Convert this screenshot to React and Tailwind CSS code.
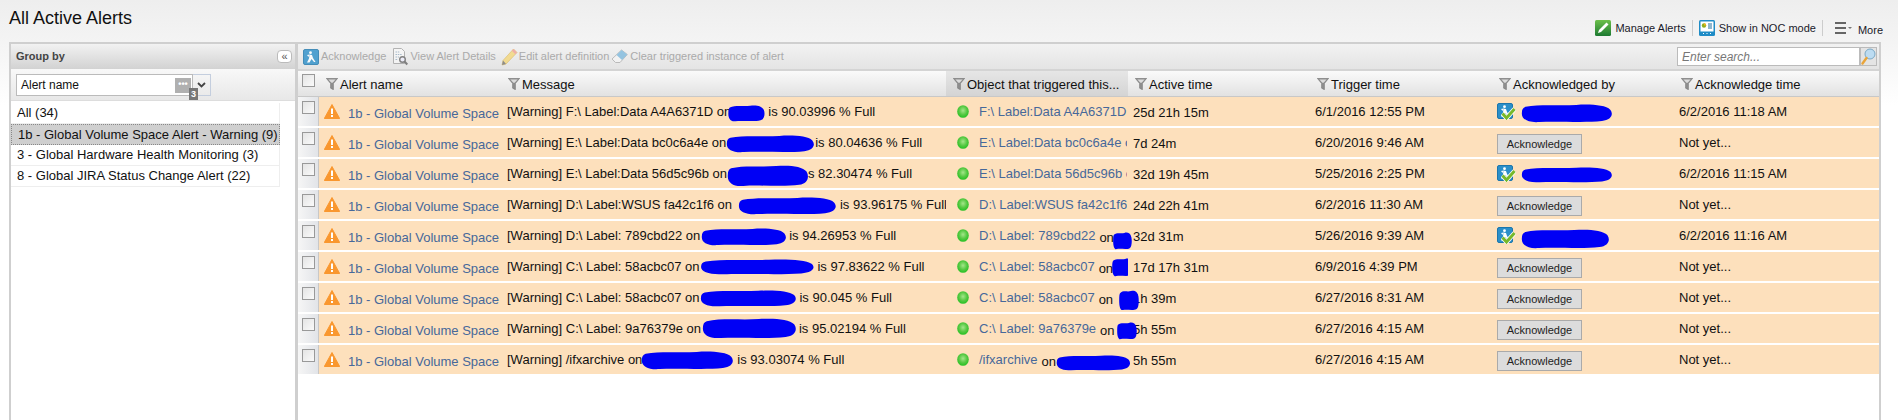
import React from "react";

const rowGrid =
  "grid grid-cols-[21px_184px_443px_182px_183px_182px_182px_204px]";

const Blob = ({ className }) => (
  <svg
    viewBox="0 0 100 20"
    preserveAspectRatio="none"
    className={`block shrink-0 ${className}`}
  >
    <path
      d="M5 3 C20 0 40 2 60 1 C75 0 92 1 97 6 C101 11 98 17 88 18 C70 20 40 18 20 19 C8 20 0 16 1 9 C1 6 2 4 5 3Z"
      fill="#0000f5"
    />
  </svg>
);

const FilterIcon = () => (
  <svg width="12" height="12" viewBox="0 0 12 12" className="shrink-0 -translate-y-px">
    <path d="M0.3 0.3 H11.7 L7.4 5.5 V11.7 L4.6 10.2 V5.5Z" fill="#8f8f8f" stroke="#747474" strokeWidth="0.6" />
    <path d="M2.4 1.4 H9.6 L6.6 4.8 H5.4Z" fill="#dcdcdc" />
  </svg>
);

const WarnIcon = () => (
  <svg width="16" height="15" viewBox="0 0 16 15" className="shrink-0">
    <path d="M8 0.5 L15.7 14.5 H0.3Z" fill="#f9972f" stroke="#f9972f" strokeLinejoin="round" />
    <rect x="7" y="4.5" width="2" height="5.5" fill="#fff" />
    <rect x="7" y="11" width="2" height="2" fill="#fff" />
  </svg>
);

const GreenDot = () => (
  <svg width="12" height="13" viewBox="0 0 12 13" className="shrink-0 -translate-y-px">
    <defs>
      <radialGradient id="dotFill" cx="50%" cy="42%" r="60%">
        <stop offset="0%" stopColor="#a4e68a" />
        <stop offset="55%" stopColor="#58c944" />
        <stop offset="100%" stopColor="#1fc01f" />
      </radialGradient>
    </defs>
    <ellipse cx="6" cy="6.5" rx="5.8" ry="6.3" fill="url(#dotFill)" />
  </svg>
);

const AckBlue = ({ faded }) => (
  <svg width="16" height="16" viewBox="0 0 16 16" className={`block shrink-0 ${faded ? "opacity-80" : ""}`}>
    <rect x="0.5" y="0.5" width="15" height="15" rx="1.5" fill="#2b8fc9" stroke="#1c76ac" />
    <circle cx="7.5" cy="3.7" r="1.4" fill="#fff" />
    <path d="M6.5 5.5 L9 6 L10 9 L12.5 13 H11 L8.5 10 L6.5 13.5 H4 L6 9.5Z M4 6 L6.5 5.5 L5.5 8 Z" fill="#fff" />
  </svg>
);

const AckChecked = () => (
  <div className="relative w-[18px] h-[17px] shrink-0 -translate-y-px">
    <AckBlue />
    <svg width="15" height="13" viewBox="0 0 15 13" className="absolute right-[-1px] bottom-0">
      <path d="M1.5 6.5 L5.5 11 L13.5 2" fill="none" stroke="#fff" strokeWidth="4.6" />
      <path d="M1.5 6.5 L5.5 11 L13.5 2" fill="none" stroke="#78b82a" strokeWidth="3" />
    </svg>
  </div>
);

const DetailsIcon = () => (
  <svg width="16" height="18" viewBox="0 0 16 18" className="block shrink-0 opacity-70">
    <path d="M1.5 0.5 H9.5 L12.5 3.5 V15.5 H1.5Z" fill="#f8f8f8" stroke="#9a9a9a" />
    <path d="M3.5 4 H8 M3.5 6.5 H10 M3.5 9 H7 M3.5 11.5 H6" stroke="#8aa6bd" strokeDasharray="1.5 0.8" />
    <circle cx="10.5" cy="11.5" r="2.8" fill="#eef" stroke="#555" strokeWidth="1.4" />
    <path d="M12.5 13.5 L15.3 16.5" stroke="#555" strokeWidth="2" />
  </svg>
);

const PencilIcon = () => (
  <svg width="17" height="18" viewBox="0 0 17 18" className="block shrink-0 opacity-80">
    <path d="M12.5 1 L16 4.5 L5 16 L1 17 L2 12.5Z" fill="#f4d77a" stroke="#d8b65a" strokeWidth="0.7" />
    <path d="M12.5 1 L16 4.5 L14.3 6.3 L10.8 2.8Z" fill="#ef9f95" />
    <path d="M2 12.5 L5 16 L1 17Z" fill="#777" />
  </svg>
);

const EraserIcon = () => (
  <svg width="17" height="16" viewBox="0 0 17 16" className="block shrink-0 opacity-70">
    <path d="M10.5 1 L16.3 5.5 L9 13.5 H4.5 L1 10Z" fill="#f6f6f6" stroke="#a8a8a8" />
    <path d="M10.5 1 L16.3 5.5 L11 11 L5.5 6Z" fill="#6fb3dc" />
  </svg>
);

const ManageIcon = () => (
  <svg width="16" height="16" viewBox="0 0 16 16" className="shrink-0">
    <defs>
      <linearGradient id="manageFill" x1="0" y1="0" x2="0" y2="1">
        <stop offset="0%" stopColor="#6cc04a" />
        <stop offset="100%" stopColor="#1d7a32" />
      </linearGradient>
    </defs>
    <rect width="16" height="16" rx="1.5" fill="url(#manageFill)" />
    <path d="M11.5 2.5 L13.5 4.5 L6 12 L3 13 L4 10Z" fill="#fff" />
  </svg>
);

const NocIcon = () => (
  <svg width="16" height="16" viewBox="0 0 16 16" className="shrink-0">
    <rect width="16" height="16" rx="1.5" fill="#1f8cc6" />
    <rect x="1.5" y="1.5" width="13" height="10" fill="#fff" />
    <circle cx="5" cy="5.5" r="2.2" fill="#8fae1c" />
    <path d="M5 5.5 V3.3 A2.2 2.2 0 0 1 7.2 5.5Z" fill="#f2b21c" />
    <path d="M9 4 H13 M9 6 H13 M9 8 H13" stroke="#1f6f9e" />
    <path d="M4 13.5 H5 M7.5 13.5 H8.5 M11 13.5 H12" stroke="#fff" />
  </svg>
);

const SearchIcon = () => (
  <svg width="15" height="17" viewBox="0 0 15 17">
    <circle cx="9" cy="6" r="5" fill="#bcdcf2" stroke="#7ba9c6" />
    <path d="M5.5 10 L1.5 15.5" stroke="#e9a53a" strokeWidth="2.4" strokeLinecap="round" />
  </svg>
);

const rows = [
  {
    msg: "[Warning] F:\\ Label:Data A4A6371D on",
    blob: "w-[37px] h-[17px] ml-[-3px] translate-y-[1px]",
    rest: "is 90.03996 % Full",
    restClass: "ml-[3px]",
    obj: "F:\\ Label:Data A4A6371D",
    active: "25d 21h 15m",
    trigger: "6/1/2016 12:55 PM",
    by: "w-[92px] h-[19px] translate-y-[1px]",
    time: "6/2/2016 11:18 AM",
  },
  {
    msg: "[Warning] E:\\ Label:Data bc0c6a4e on",
    blob: "w-[89px] h-[18px] translate-y-[1px]",
    rest: "is 80.04636 % Full",
    obj: "E:\\ Label:Data bc0c6a4e on",
    active: "7d 24m",
    trigger: "6/20/2016 9:46 AM",
    time: "Not yet...",
  },
  {
    msg: "[Warning] E:\\ Label:Data 56d5c96b on",
    blob: "w-[82px] h-[22px] translate-y-[2px]",
    rest: "s 82.30474 % Full",
    restClass: "ml-[-1px]",
    obj: "E:\\ Label:Data 56d5c96b on",
    active: "32d 19h 45m",
    trigger: "5/25/2016 2:25 PM",
    by: "w-[92px] h-[16px] translate-y-[1px]",
    time: "6/2/2016 11:15 AM",
  },
  {
    msg: "[Warning] D:\\ Label:WSUS fa42c1f6 on",
    blob: "w-[99px] h-[18px] ml-[6px] translate-y-[1px]",
    rest: "is 93.96175 % Full",
    restClass: "ml-[3px]",
    obj: "D:\\ Label:WSUS fa42c1f6",
    active: "24d 22h 41m",
    trigger: "6/2/2016 11:30 AM",
    time: "Not yet...",
  },
  {
    msg: "[Warning] D:\\ Label: 789cbd22 on",
    blob: "w-[86px] h-[18px] ml-[1px] translate-y-[1px]",
    rest: "is 94.26953 % Full",
    restClass: "ml-[2px]",
    obj: "D:\\ Label: 789cbd22",
    on: true,
    objBlob: "w-[19px] h-[18px] ml-[-1px] translate-y-[5px]",
    active: "32d 31m",
    trigger: "5/26/2016 9:39 AM",
    by: "w-[89px] h-[20px] translate-y-[3px]",
    time: "6/2/2016 11:16 AM",
  },
  {
    msg: "[Warning] C:\\ Label: 58acbc07 on",
    blob: "w-[115px] h-[16px] ml-[1px]",
    rest: "is 97.83622 % Full",
    restClass: "ml-[2px]",
    obj: "C:\\ Label: 58acbc07",
    on: true,
    objBlob: "w-[22px] h-[19px] ml-[-1px]",
    active: "17d 17h 31m",
    trigger: "6/9/2016 4:39 PM",
    time: "Not yet...",
  },
  {
    msg: "[Warning] C:\\ Label: 58acbc07 on",
    blob: "w-[97px] h-[17px] ml-[1px]",
    rest: "is 90.045 % Full",
    restClass: "ml-[2px]",
    obj: "C:\\ Label: 58acbc07",
    on: true,
    objBlob: "w-[20px] h-[21px] ml-[6px] translate-y-[2px]",
    active: "1h 39m",
    trigger: "6/27/2016 8:31 AM",
    time: "Not yet...",
  },
  {
    msg: "[Warning] C:\\ Label: 9a76379e on",
    blob: "w-[95px] h-[21px] ml-[1px] translate-y-[-1px]",
    rest: "is 95.02194 % Full",
    restClass: "ml-[2px]",
    obj: "C:\\ Label: 9a76379e",
    on: true,
    objBlob: "w-[20px] h-[18px] ml-[2px] translate-y-[2px]",
    active: "5h 55m",
    trigger: "6/27/2016 4:15 AM",
    time: "Not yet...",
  },
  {
    msg: "[Warning] /ifxarchive on",
    blob: "w-[93px] h-[19px] ml-[-1px]",
    rest: "is 93.03074 % Full",
    restClass: "ml-[3px]",
    obj: "/ifxarchive",
    on: true,
    objBlob: "w-[75px] h-[16px] translate-y-[3px]",
    active: "5h 55m",
    trigger: "6/27/2016 4:15 AM",
    time: "Not yet...",
  },
];

const groups = [
  { label: "All (34)" },
  { label: "1b - Global Volume Space Alert - Warning (9)", selected: true },
  { label: "3 - Global Hardware Health Monitoring (3)" },
  { label: "8 - Global JIRA Status Change Alert (22)" },
];

const columns = [
  { label: "Alert name", cls: "pl-[7px]" },
  { label: "Message", cls: "pl-[5px]" },
  { label: "Object that triggered this...", cls: "pl-[7px] bg-gradient-to-b from-[#e6e6e6] to-[#d4d4d4]" },
  { label: "Active time", cls: "pl-[7px]" },
  { label: "Trigger time", cls: "pl-[6px]" },
  { label: "Acknowledged by", cls: "pl-[6px]" },
  { label: "Acknowledge time", cls: "pl-[6px]" },
];

const Checkbox = () => (
  <div className="w-[13px] h-[13px] border border-[#999] bg-gradient-to-br from-[#e4e4e4] to-[#fafafa]" />
);

const AlertRow = ({ row }) => (
  <div className={`${rowGrid} h-[31px] border-b-2 border-white text-[13px] text-[#111]`}>
    <div className="flex justify-start pl-1 pt-1 bg-gradient-to-r from-[#f6f6f6] to-[#e2e4e8] border-r border-[#c8c8c8]">
      <Checkbox />
    </div>
    <div className="flex items-center gap-2 pl-[5px] bg-[#fde0bc]">
      <WarnIcon />
      <span className="text-[#46689a] whitespace-nowrap translate-y-[2px]">1b - Global Volume Space</span>
    </div>
    <div className="flex items-center pl-1 pt-px bg-[#fde0bc] whitespace-nowrap">
      <span>{row.msg}</span>
      <Blob className={row.blob} />
      <span className={row.restClass}>{row.rest}</span>
    </div>
    <div className="flex items-center pl-[11px] pt-px bg-[#fde0bc] whitespace-nowrap">
      <GreenDot />
      {row.on ? (
        <>
          <span className="ml-[10px] text-[#46689a]">{row.obj}</span>
          <span className="ml-1 translate-y-[2px]">on</span>
          <Blob className={row.objBlob} />
        </>
      ) : (
        <span className="ml-[10px] w-[148px] overflow-hidden text-[#46689a]">{row.obj}</span>
      )}
    </div>
    <div className="flex items-center pl-[5px] pt-[2px] bg-[#fde0bc] whitespace-nowrap">{row.active}</div>
    <div className="flex items-center pl-1 pt-px bg-[#fde0bc] whitespace-nowrap">{row.trigger}</div>
    <div className="flex items-center pl-1 pt-px bg-[#fde0bc]">
      {row.by ? (
        <>
          <AckChecked />
          <Blob className={`ml-[6px] ${row.by}`} />
        </>
      ) : (
        <button className="w-[85px] h-[20px] border border-[#aaa] bg-[#dcdcdc] text-[11px] text-[#222] translate-y-[1px]">
          Acknowledge
        </button>
      )}
    </div>
    <div className="flex items-center pl-1 pt-px bg-[#fde0bc] whitespace-nowrap">{row.time}</div>
  </div>
);

export default function App() {
  return (
    <div className="h-[420px] w-[1898px] overflow-hidden bg-gradient-to-b from-[#eeeeee] via-[#f4f4f4] via-10% to-white to-25% font-['Liberation_Sans',Arial,sans-serif] text-[#111]">
      <div className="h-[42px] flex justify-between items-start">
        <h1 className="pl-[9px] pt-2 text-[18px] leading-5">All Active Alerts</h1>
        <div className="flex items-center pt-5 pr-[15px] text-[11px] leading-4 text-[#1a1a2a]">
          <ManageIcon />
          <span className="ml-1">Manage Alerts</span>
          <div className="mx-[6px] w-px h-4 bg-[#ccc]" />
          <NocIcon />
          <span className="ml-1">Show in NOC mode</span>
          <div className="ml-[6px] w-px h-4 bg-[#ccc]" />
          <div className="ml-[12px] flex flex-col gap-[3px]">
            <div className="w-[11px] h-[2px] bg-[#666]" />
            <div className="w-[11px] h-[2px] bg-[#666]" />
            <div className="w-[11px] h-[2px] bg-[#666]" />
          </div>
          <div className="ml-[2px] mr-[6px] border-x-2 border-t-2 border-x-transparent border-t-[#777]" />
          <span className="translate-y-[2px]">More</span>
        </div>
      </div>

      <div className="ml-[9px] w-[1872px] h-[378px] flex border-t-2 border-x-2 border-[#cfcfcf]">
        {/* group by panel */}
        <div className="w-[284px] shrink-0 border-r-[3px] box-content border-[#cfcfcf] bg-white">
          <div className="h-[25px] flex items-center justify-between pl-[5px] pr-[3px] bg-gradient-to-b from-[#f2f2f2] to-[#d2d2d2]">
            <span className="text-[11px] font-bold text-[#444]">Group by</span>
            <div className="w-[15px] h-[13px] rounded-sm border border-[#bbb] bg-white flex items-center justify-center text-[11px] leading-none text-[#555]">
              «
            </div>
          </div>
          <div className="h-[32px] pt-[5px] pl-[5px] bg-gradient-to-b from-[#f8f8f8] to-[#e8e8e8] border-b border-[#ddd]">
            <div className="relative flex w-[195px] h-[22px]">
              <div className="w-[177px] border border-[#bbb] bg-white flex items-center justify-between pl-1 pr-px text-[12px]">
                <span>Alert name</span>
                <div className="w-[16px] h-[15px] bg-[#b0b0b0] text-white text-[9px] font-bold leading-3 text-center">
                  •••
                </div>
              </div>
              <div className="w-[18px] border-y border-r border-[#c4cede] flex items-center justify-center">
                <svg width="9" height="6" viewBox="0 0 9 6">
                  <path d="M1 1 L4.5 4.5 L8 1" fill="none" stroke="#444" strokeWidth="1.8" />
                </svg>
              </div>
              <div className="absolute left-[173px] top-[14px] w-[9px] h-[12px] bg-[#777] text-white text-[9px] font-bold leading-3 text-center">
                3
              </div>
            </div>
          </div>
          <div className="w-[269px] pt-[2px] text-[13px]">
            {groups.map((g) => (
              <div
                key={g.label}
                className={`h-[21px] pl-[6px] flex items-center whitespace-nowrap border-b border-r ${
                  g.selected ? "bg-[#cfcfcf] border border-dotted border-[#888]" : "border-[#eee]"
                }`}
              >
                {g.label}
              </div>
            ))}
          </div>
        </div>

        {/* alerts grid */}
        <div className="flex-1 min-w-0 bg-white">
          <div className="h-[27px] flex items-center justify-between pl-[5px] pr-[2px] bg-gradient-to-b from-[#f2f2f2] to-[#e4e4e4] border-b-2 border-[#d4d4d4] text-[11px] text-[#aaa]">
            <div className="flex items-center">
              <AckBlue faded />
              <span className="ml-[2px]">Acknowledge</span>
              <div className="ml-[6px]"><DetailsIcon /></div>
              <span className="ml-[2px]">View Alert Details</span>
              <div className="ml-[5px]"><PencilIcon /></div>
              <span className="ml-[1px]">Edit alert definition</span>
              <div className="ml-[2px]"><EraserIcon /></div>
              <span className="ml-[2px]">Clear triggered instance of alert</span>
            </div>
            <div className="flex items-center">
              <input
                readOnly
                placeholder="Enter search..."
                className="w-[183px] h-[19px] pl-1 border border-[#bbb] bg-white text-[12px] italic placeholder:text-[#777] outline-none"
              />
              <div className="w-[17px] h-[19px] border border-[#bbb] bg-[#e4e4e4] flex items-center justify-center">
                <SearchIcon />
              </div>
            </div>
          </div>

          <div className={`${rowGrid} h-[26px] border-b border-[#c8c8c8] bg-gradient-to-b from-[#fafafa] to-[#e2e2e2] text-[13px] text-[#111]`}>
            <div className="pl-1 pt-[3px]">
              <Checkbox />
            </div>
            {columns.map((c) => (
              <div key={c.label} className={`flex items-center gap-[2px] pt-[2px] whitespace-nowrap ${c.cls}`}>
                <FilterIcon />
                <span>{c.label}</span>
              </div>
            ))}
          </div>

          {rows.map((row, i) => (
            <AlertRow key={i} row={row} />
          ))}
        </div>
      </div>
    </div>
  );
}
